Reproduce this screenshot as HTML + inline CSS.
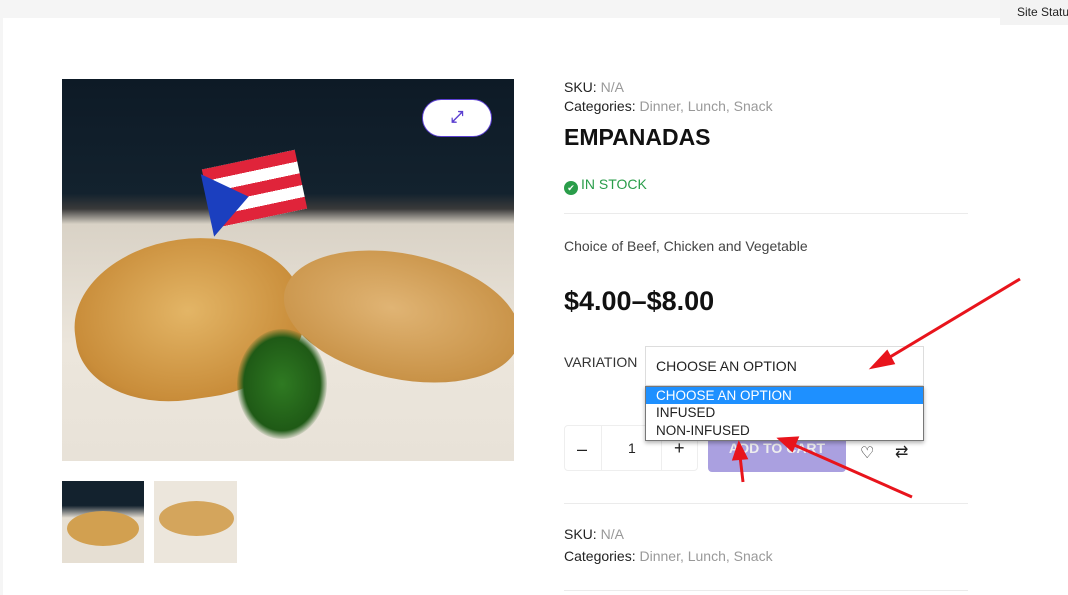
<!DOCTYPE html>
<html><head><style>
body{margin:0;width:1068px;height:595px;overflow:hidden;background:#f5f5f5;font-family:"Liberation Sans",sans-serif;position:relative}
.panel{position:absolute;left:3px;top:18px;width:1065px;height:577px;background:#fff}
.ab{position:absolute}
.status{position:absolute;left:1000px;top:0;width:68px;height:25px;background:#f3f3f3;font-size:12px;color:#222;padding:5px 0 0 17px;box-sizing:border-box;white-space:nowrap;overflow:hidden}
.t{font-size:14px;color:#222;white-space:nowrap}
.g{color:#999}
.hr{position:absolute;left:564px;width:404px;height:1px;background:#ebebeb}
</style></head><body>
<div class="panel"></div>
<div class="status">Site Status</div>

<div class="ab" style="left:62px;top:79px;width:452px;height:382px;overflow:hidden;background:linear-gradient(#0d1a26 0%,#13222e 30%,#3a3a3a 34%,#d9d2c6 38%,#ece6dc 70%,#e8e2d8 100%)">
 <div class="ab" style="left:12px;top:160px;width:230px;height:160px;border-radius:50% 50% 45% 45%;background:radial-gradient(ellipse at 50% 45%,#e3b566,#c98d3a 70%,#a86e2a);transform:rotate(-8deg)"></div>
 <div class="ab" style="left:220px;top:175px;width:240px;height:125px;border-radius:50%;background:radial-gradient(ellipse at 45% 45%,#e0b474,#c99348 70%,#a8763a);transform:rotate(12deg)"></div>
 <div class="ab" style="left:175px;top:250px;width:90px;height:110px;border-radius:50%;background:radial-gradient(#2f7a22,#1f5a16 60%,transparent 72%)"></div>
 <div class="ab" style="left:145px;top:80px;width:95px;height:60px;background:repeating-linear-gradient(#e0243a 0 12px,#fff 12px 24px);transform:rotate(-12deg)"></div>
 <div class="ab" style="left:145px;top:90px;width:0;height:0;border-top:32px solid transparent;border-bottom:32px solid transparent;border-left:42px solid #1b3fbf;transform:rotate(-12deg)"></div>
 <div class="ab" style="left:360px;top:20px;width:70px;height:38px;border-radius:20px;background:#fff;border:1.5px solid #5b3fd0;box-sizing:border-box;color:#5b3fd0;font-size:16px;font-weight:bold;text-align:center;line-height:35px">⤢</div>
</div>
<div class="ab" style="left:62px;top:481px;width:82px;height:82px;background:linear-gradient(#13222e 30%,#e6dfd3 45%);"><div class="ab" style="left:5px;top:30px;width:72px;height:35px;border-radius:50%;background:#d2a050"></div></div>
<div class="ab" style="left:154px;top:481px;width:83px;height:82px;background:#ece6dc"><div class="ab" style="left:5px;top:20px;width:75px;height:35px;border-radius:50%;background:#d4a55c"></div></div>

<div class="ab t" style="left:564px;top:79px">SKU: <span class="g">N/A</span></div>
<div class="ab t" style="left:564px;top:98px">Categories: <span class="g">Dinner, Lunch, Snack</span></div>
<div class="ab" style="left:564px;top:124px;font-size:23px;font-weight:bold;color:#111">EMPANADAS</div>
<div class="ab t" style="left:564px;top:176px;color:#2a9d4a"><span style="display:inline-block;width:14px;height:14px;border-radius:50%;background:#2a9d4a;color:#fff;font-size:9px;text-align:center;line-height:14px;vertical-align:-2px;margin-right:3px">✔</span>IN STOCK</div>
<div class="hr" style="top:213px"></div>
<div class="ab t" style="left:564px;top:238px;color:#444">Choice of Beef, Chicken and Vegetable</div>
<div class="ab" style="left:564px;top:286px;font-size:27px;font-weight:bold;color:#111">$4.00–$8.00</div>
<div class="ab t" style="left:564px;top:354px;color:#333">VARIATION</div>
<div class="ab t" style="left:645px;top:346px;width:279px;height:40px;border:1px solid #ddd;box-sizing:border-box;padding:11px 10px;color:#222">CHOOSE AN OPTION</div>

<div class="ab" style="left:564px;top:425px;width:134px;height:46px;border:1px solid #eee;border-radius:4px;box-sizing:border-box">
 <div class="ab" style="left:36px;top:0;width:1px;height:44px;background:#eee"></div>
 <div class="ab" style="left:96px;top:0;width:1px;height:44px;background:#eee"></div>
 <div class="ab t" style="left:12px;top:13px;font-size:18px">–</div>
 <div class="ab t" style="left:63px;top:14px">1</div>
 <div class="ab t" style="left:109px;top:12px;font-size:18px">+</div>
</div>
<div class="ab" style="left:708px;top:425px;width:138px;height:47px;background:#aaa0e0;border-radius:4px;color:#eee;font-weight:bold;font-size:14px;text-align:center;line-height:46px">ADD TO CART</div>
<div class="ab" style="left:860px;top:443px;font-size:16px;color:#222">♡</div>
<div class="ab" style="left:895px;top:442px;font-size:16px;color:#222">⇄</div>

<div class="ab" style="left:645px;top:386px;width:279px;height:55px;background:#fff;border:1px solid #777;box-sizing:border-box;box-shadow:0 2px 4px rgba(0,0,0,.3);font-size:13.5px;color:#222">
 <div style="background:#1e90ff;color:#fff;height:17px;line-height:17px;padding-left:10px">CHOOSE AN OPTION</div>
 <div style="height:18px;line-height:18px;padding-left:10px">INFUSED</div>
 <div style="height:18px;line-height:18px;padding-left:10px">NON-INFUSED</div>
</div>

<div class="hr" style="top:503px"></div>
<div class="ab t" style="left:564px;top:526px">SKU: <span class="g">N/A</span></div>
<div class="ab t" style="left:564px;top:548px">Categories: <span class="g">Dinner, Lunch, Snack</span></div>
<div class="hr" style="top:590px"></div>

<svg class="ab" style="left:0;top:0" width="1068" height="595">
 <g stroke="#e8141c" stroke-width="3" fill="#e8141c">
  <line x1="1020" y1="279" x2="885" y2="360"/><polygon points="873,367 887,352 893,363"/>
  <line x1="912" y1="497" x2="792" y2="444"/><polygon points="780,439 797,438 792,450"/>
  <line x1="743" y1="482" x2="740" y2="456"/><polygon points="739,444 746,458 734,459"/>
 </g>
</svg>
</body></html>
